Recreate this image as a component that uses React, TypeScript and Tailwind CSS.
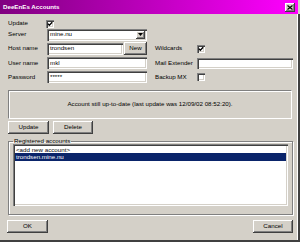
import React from 'react';

const raised =
  'bg-[#d4d0c8] shadow-[inset_-1px_-1px_0_#404040,inset_1px_1px_0_#ffffff,inset_-2px_-2px_0_#808080]';
const sunken =
  'bg-white shadow-[inset_1px_1px_0_#808080,inset_2px_2px_0_#404040,inset_-1px_-1px_0_#ffffff,inset_-2px_-2px_0_#d4d0c8]';

function Check({ checked }: { checked?: boolean }) {
  return (
    <div className={`flex h-[8px] w-[8px] items-center justify-center ${sunken}`}>
      {checked && (
        <svg width="6" height="6" viewBox="0 0 6 6">
          <path d="M0.8 2.6 L2.3 4.2 L5.2 1.2" stroke="#000" strokeWidth="1.3" fill="none" />
        </svg>
      )}
    </div>
  );
}

function Button({ label, w }: { label: string; w: string }) {
  return (
    <div className={`flex h-[13px] items-center justify-center text-black ${w} ${raised}`}>
      {label}
    </div>
  );
}

export default function App() {
  return (
    <div
      className="relative flex h-[242px] w-[300px] flex-col overflow-hidden bg-[#d4d0c8] text-[6.2px] leading-none text-black"
      style={{ fontFamily: '"Liberation Sans", Arial, sans-serif' }}
    >
      {/* title bar */}
      <div className="flex h-[14px] w-[298px] items-center justify-between bg-gradient-to-r from-[#800080] to-[#ff00ff] pl-[3px] pr-[3px]">
        <span className="font-bold text-white">DeeEnEs Accounts</span>
        <div className={`flex h-[9px] w-[10px] items-center justify-center ${raised}`}>
          <svg width="6" height="5" viewBox="0 0 6 5">
            <path d="M0.5 0.5 L5.5 4.5 M5.5 0.5 L0.5 4.5" stroke="#000" strokeWidth="1.2" />
          </svg>
        </div>
      </div>

      <div className="flex flex-1 border-b-[2px] border-r-[2px] border-b-[#404040] border-r-[#404040]">
        <div className="flex flex-1 flex-col border-r border-r-[#ffffff] pl-[8px] pr-[2px]">
          {/* row: update */}
          <div className="mt-[5px] flex h-[9px] items-center">
            <span className="w-[38px]">Update</span>
            <Check checked />
          </div>
          {/* row: server */}
          <div className="mt-[0px] flex h-[13px] items-center">
            <span className="w-[39px]">Server</span>
            <div className={`flex h-[12px] w-[100px] items-center pl-[3px] pr-[2px] ${sunken}`}>
              <span className="flex-1">mine.nu</span>
              <div className={`flex h-[8px] w-[9px] items-center justify-center ${raised}`}>
                <svg width="5" height="3" viewBox="0 0 5 3">
                  <path d="M0 0 H5 L2.5 3 Z" fill="#000" />
                </svg>
              </div>
            </div>
          </div>
          {/* row: host name */}
          <div className="mt-[1px] flex h-[13px] items-center">
            <div className="flex w-[147px] items-center">
              <span className="w-[39px]">Host name</span>
              <div className={`flex h-[12px] w-[76px] items-center pl-[3px] ${sunken}`}>trondsen</div>
              <Button label="New" w="ml-[1px] w-[23px]" />
            </div>
            <span className="w-[42px]">Wildcards</span>
            <Check checked />
          </div>
          {/* row: user name */}
          <div className="mt-[2px] flex h-[12px] items-center">
            <div className="flex w-[147px] items-center">
              <span className="w-[39px]">User name</span>
              <div className={`flex h-[12px] w-[100px] items-center pl-[3px] ${sunken}`}>mkl</div>
            </div>
            <span className="w-[42px]">Mail Extender</span>
            <div className={`mt-[1px] h-[11px] w-[96px] ${sunken}`} />
          </div>
          {/* row: password */}
          <div className="mt-[2px] flex h-[12px] items-center">
            <div className="flex w-[147px] items-center">
              <span className="w-[39px]">Password</span>
              <div className={`flex h-[12px] w-[100px] items-center pl-[3px] ${sunken}`}>*****</div>
            </div>
            <span className="w-[42px]">Backup MX</span>
            <Check />
          </div>

          {/* status */}
          <div className="mt-[7px] flex h-[29px] w-[284px] items-center justify-center border border-b-white border-l-[#808080] border-r-white border-t-[#808080] shadow-[inset_1px_1px_0_#ffffff]">
            Account still up-to-date (last update was 12/09/02 08:52:20).
          </div>

          {/* update / delete */}
          <div className="mt-[2px] flex gap-[4px]">
            <Button label="Update" w="w-[41px]" />
            <Button label="Delete" w="w-[40px]" />
          </div>

          {/* registered accounts */}
          <fieldset className="mt-[4px] h-[77px] w-[284px] border border-[#808080] px-[4px] pb-[3px] shadow-[1px_1px_0_#ffffff,inset_1px_1px_0_#ffffff]">
            <legend className="ml-[0px] px-[1px]">Registered accounts</legend>
            <div className={`h-[62px] w-[275px] p-[2px] ${sunken}`}>
              <div className="flex h-[7px] items-center pl-[1px]">&lt;add new account&gt;</div>
              <div className="flex h-[8px] items-center bg-[#0a246a] pl-[1px] text-white">trondsen.mine.nu</div>
            </div>
          </fieldset>

          {/* ok / cancel */}
          <div className="mt-[5px] flex w-[285px] justify-between pl-[0px]">
            <Button label="OK" w="-ml-[1px] w-[41px]" />
            <Button label="Cancel" w="w-[40px]" />
          </div>
        </div>
      </div>
    </div>
  );
}
